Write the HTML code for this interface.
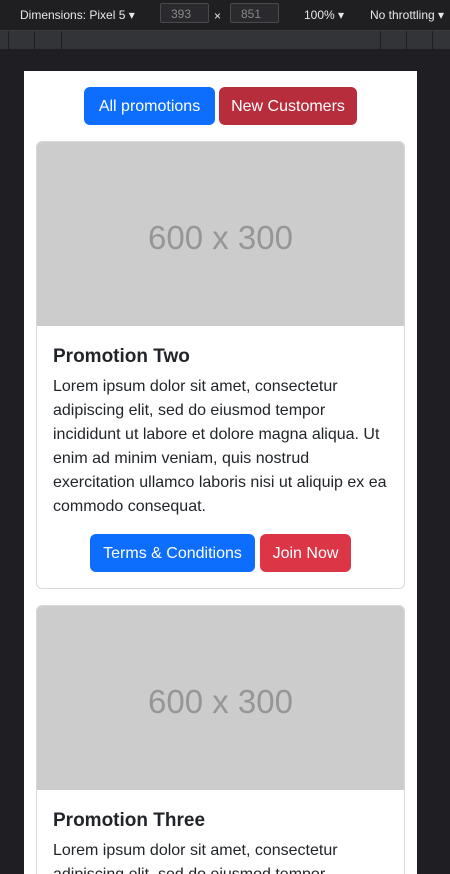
<!DOCTYPE html>
<html><head><style>
body{margin:0;width:450px;height:874px;background:#1f1f23;overflow:hidden;font-family:"Liberation Sans",sans-serif;position:relative}
.tb{position:absolute;left:0;top:0;width:450px;height:30px;background:#1f1f22;color:#e8e8e8;font-size:12px;border-bottom:1px solid #3a3a3e}
.tb span{position:absolute;top:8px}
.inp{position:absolute;top:3px;height:20px;border:1px solid #4a4a4e;background:#2a2a2e;color:#888;font-size:12px;line-height:20px;padding-left:10px;box-sizing:border-box;border-radius:2px}
.rul{position:absolute;top:31px;left:0;width:450px;height:18px;background:#333438}
.rul i{position:absolute;top:0;width:1px;height:18px;background:#1f1f22}
.frame{position:absolute;left:24px;top:71px;width:393px;height:803px;background:#fff;overflow:hidden}
.btn{position:absolute;color:#fff;font-size:16px;border-radius:6px;text-align:center;line-height:40px;height:38px}
.card{position:absolute;left:12px;width:367px;border:1px solid #d8d8d8;border-radius:6px;overflow:hidden;color:#212529}
.img{height:184px;background:#ccc;color:#969696;font-size:33px;text-align:center;line-height:192px}
h5{margin:19px 16px 6px 16px;font-size:19px;font-weight:bold;line-height:24px}
p{margin:0 16px;font-size:16px;line-height:24px}
</style></head><body>
<div class="tb"><span style="left:20px">Dimensions: Pixel 5 ▾</span>
<div class="inp" style="left:160px;width:49px">393</div><span style="left:214px;top:9px">×</span>
<div class="inp" style="left:230px;width:49px">851</div>
<span style="left:304px">100% ▾</span><span style="left:370px">No throttling ▾</span></div>
<div class="rul"><i style="left:8px"></i><i style="left:34px"></i><i style="left:61px"></i><i style="left:380px"></i><i style="left:406px"></i><i style="left:432px"></i></div>
<div class="frame">
<div class="btn" style="left:60px;top:16px;width:131px;background:#0d6efd">All promotions</div>
<div class="btn" style="left:195px;top:16px;width:138px;background:#b82d3c">New Customers</div>
<div class="card" style="top:70px;height:446px">
<div class="img">600 x 300</div>
<h5>Promotion Two</h5>
<p>Lorem ipsum dolor sit amet, consectetur adipiscing elit, sed do eiusmod tempor incididunt ut labore et dolore magna aliqua. Ut enim ad minim veniam, quis nostrud exercitation ullamco laboris nisi ut aliquip ex ea commodo consequat.</p>
<div class="btn" style="left:53px;top:392px;width:165px;background:#0d6efd">Terms &amp; Conditions</div>
<div class="btn" style="left:223px;top:392px;width:91px;background:#dc3545">Join Now</div>
</div>
<div class="card" style="top:534px;height:280px">
<div class="img">600 x 300</div>
<h5>Promotion Three</h5>
<p>Lorem ipsum dolor sit amet, consectetur adipiscing elit, sed do eiusmod tempor</p>
</div>
</div>
</body></html>
